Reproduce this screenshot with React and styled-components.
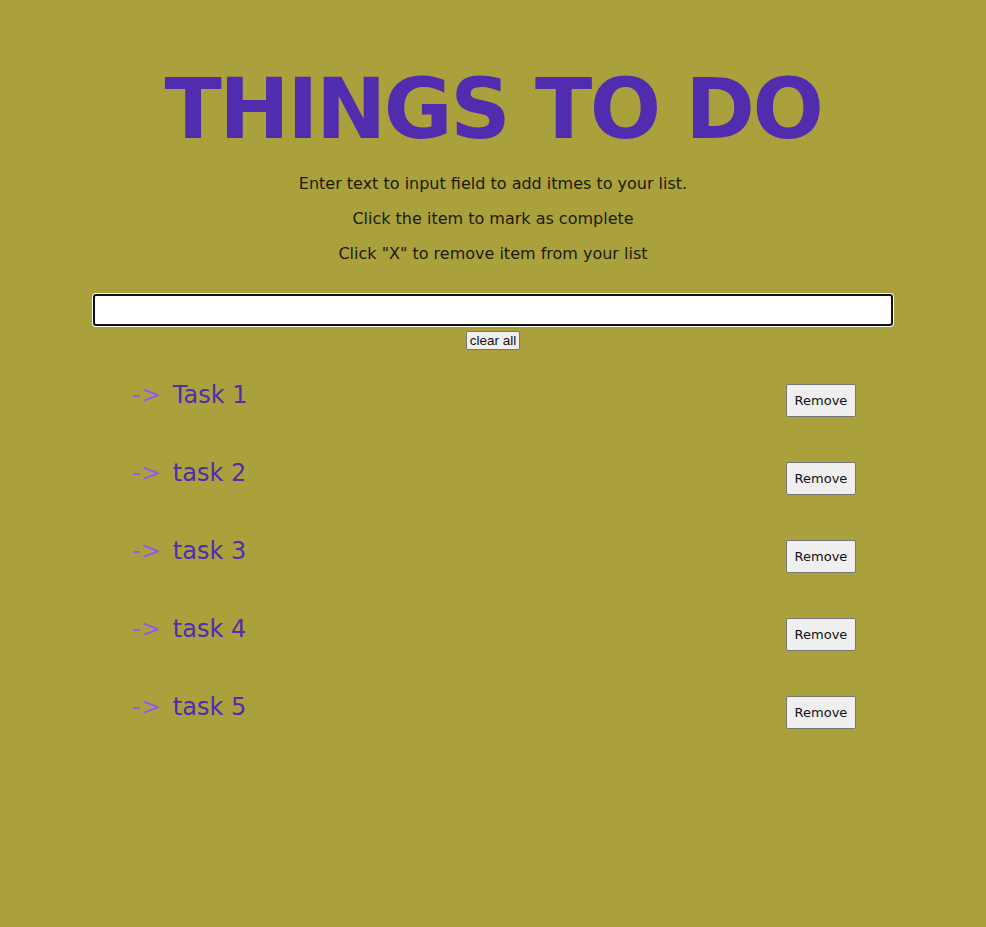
import React from "react";
import styled, { createGlobalStyle } from "styled-components";

const Global = createGlobalStyle`
  html, body { margin: 0; padding: 0; background: #aba13c; }
  body { font-family: "DejaVu Sans", Verdana, sans-serif; }
`;

const Page = styled.main`
  min-height: 927px;
  box-sizing: border-box;
  background: #aba13c;
  padding-top: 60px;
  display: flex;
  flex-direction: column;
  align-items: center;
`;

const Title = styled.h1`
  margin: 0;
  font-family: "DejaVu Sans", Verdana, sans-serif;
  font-weight: bold;
  font-size: 84px;
  letter-spacing: -2.5px;
  line-height: 98px;
  color: #512cae;
  text-align: center;
`;

const Instructions = styled.div`
  display: flex;
  flex-direction: column;
  gap: 16px;
  margin-top: 16px;
`;

const Note = styled.p`
  margin: 0;
  font-size: 16px;
  line-height: 19px;
  color: #1c1a08;
  text-align: center;
`;

const Field = styled.input`
  margin-top: 31px;
  width: 800px;
  height: 32px;
  box-sizing: border-box;
  border: 2px solid #101010;
  border-radius: 3px;
  box-shadow: 0 0 0 1px #ffffff;
  background: #ffffff;
  padding: 0 4px;
  font-size: 16px;
  font-family: "DejaVu Sans", sans-serif;
  outline: none;
`;

const ClearButton = styled.button`
  margin-top: 5px;
  height: 19px;
  padding: 0 3px;
  font-family: "Liberation Sans", Arial, sans-serif;
  font-size: 13.5px;
  line-height: 15px;
  color: #111;
  background: #efefef;
  border: 1px solid #767676;
  border-radius: 2px;
`;

const List = styled.ul`
  list-style: none;
  margin: 31px 0 0;
  padding: 0;
  width: 724px;
  display: flex;
  flex-direction: column;
  gap: 38px;
  transform: translateX(1px);
`;

const Row = styled.li`
  display: flex;
  justify-content: space-between;
  align-items: flex-start;
  height: 40px;
`;

const Label = styled.span`
  font-size: 24px;
  line-height: 28px;
  color: #512cae;
  cursor: pointer;
`;

const Arrow = styled.span`
  color: #8d5fe2;
  margin-right: 12px;
`;

const RemoveButton = styled.button`
  margin-top: 3px;
  width: 70px;
  height: 33px;
  font-family: "DejaVu Sans", Verdana, sans-serif;
  font-size: 13px;
  color: #111;
  background: #efefef;
  border: 1px solid #767676;
  border-radius: 2px;
  padding: 0;
`;

const tasks = ["Task 1", "task 2", "task 3", "task 4", "task 5"];

export default function App() {
  return (
    <>
      <Global />
      <Page>
        <Title>THINGS TO DO</Title>
        <Instructions>
          <Note>Enter text to input field to add itmes to your list.</Note>
          <Note>Click the item to mark as complete</Note>
          <Note>Click "X" to remove item from your list</Note>
        </Instructions>
        <Field type="text" autoFocus />
        <ClearButton>clear all</ClearButton>
        <List>
          {tasks.map((t) => (
            <Row key={t}>
              <Label>
                <Arrow>-&gt;</Arrow>
                {t}
              </Label>
              <RemoveButton>Remove</RemoveButton>
            </Row>
          ))}
        </List>
      </Page>
    </>
  );
}
